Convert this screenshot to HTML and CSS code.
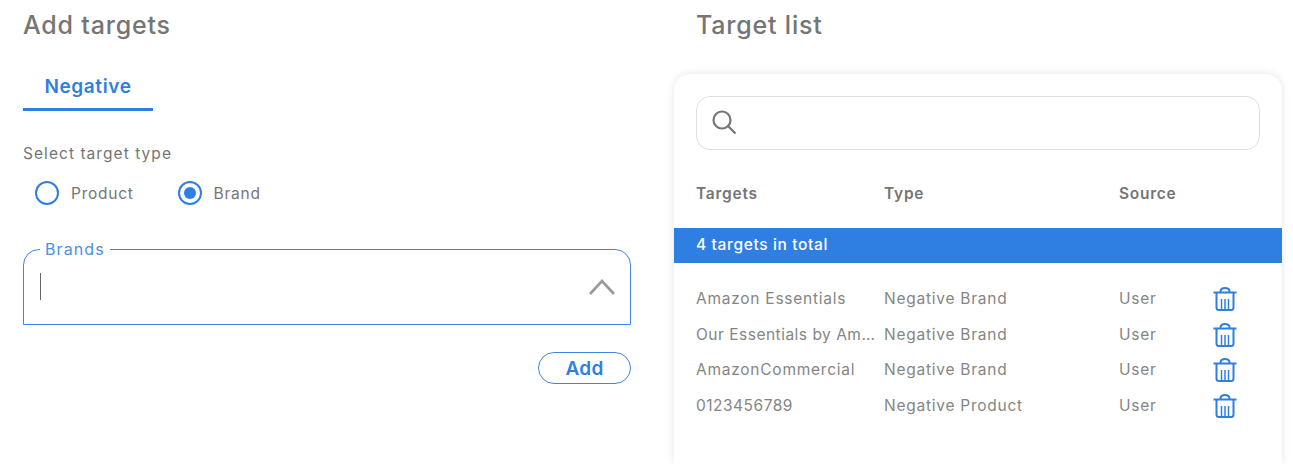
FILE: index.html
```html
<!DOCTYPE html>
<html lang="en">
<head>
  <meta charset="UTF-8">
  <meta name="viewport" content="width=device-width, initial-scale=1.0">
  <title>Targets</title>
  <link rel="stylesheet" href="styles.css">
</head>
<body>
  <svg class="defs" width="0" height="0">
    <symbol id="trash" viewBox="0 0 24 24">
      <path d="M0.500 5.500 H23.500 M3.500 5.500 V20.500 Q3.500 23 6 23 H18 Q20.500 23 20.500 20.500 V5.500 M7.500 5.500 V4.500 Q7.500 1 12 1 Q16.500 1 16.500 4.500 V5.500" fill="none" stroke="#2f7fe3" stroke-width="2"/>
      <path d="M8.500 12 V23 M12 12 V23 M15.500 12 V23" fill="none" stroke="#2f7fe3" stroke-width="1.500"/>
    </symbol>
  </svg>

  <main class="page">
    <section class="add">
      <h2 class="title">Add targets</h2>
      <div class="tabs">
        <button class="tab" type="button">Negative</button>
      </div>
      <p class="type-label">Select target type</p>
      <div class="radios">
        <label class="radio"><span class="dot"></span>Product</label>
        <label class="radio"><span class="dot dot-on"></span>Brand</label>
      </div>
      <fieldset class="brands">
        <legend>Brands</legend>
        <span class="caret"></span>
        <svg class="chevron" width="28" height="18" viewBox="0 0 28 18" fill="none">
          <path d="M2 16 L14 3 L26 16" stroke="#9a9a9a" stroke-width="2.600"/>
        </svg>
      </fieldset>
      <div class="actions">
        <button class="add-btn" type="button">Add</button>
      </div>
    </section>

    <section class="list">
      <h2 class="title list-title">Target list</h2>
      <div class="card">
        <div class="search">
          <svg class="search-icon" width="24" height="24" viewBox="0 0 24 24" fill="none" stroke="#757575" stroke-width="2.200">
            <circle cx="10" cy="10" r="8.500"/>
            <path d="M16 16 L23.500 23.500"/>
          </svg>
        </div>
        <div class="row head">
          <span>Targets</span>
          <span>Type</span>
          <span>Source</span>
        </div>
        <div class="total">4 targets in total</div>
        <div class="rows">
          <div class="row">
            <span>Amazon Essentials</span>
            <span>Negative Brand</span>
            <span>User</span>
            <svg class="trash"><use href="#trash"/></svg>
          </div>
          <div class="row">
            <span class="tight">Our Essentials by Am…</span>
            <span>Negative Brand</span>
            <span>User</span>
            <svg class="trash"><use href="#trash"/></svg>
          </div>
          <div class="row">
            <span>AmazonCommercial</span>
            <span>Negative Brand</span>
            <span>User</span>
            <svg class="trash"><use href="#trash"/></svg>
          </div>
          <div class="row">
            <span class="tight">0123456789</span>
            <span>Negative Product</span>
            <span>User</span>
            <svg class="trash"><use href="#trash"/></svg>
          </div>
        </div>
      </div>
    </section>
  </main>
</body>
</html>
```

FILE: styles.css
```css
* {
  box-sizing: border-box;
  font-family: Inter, "Open Sans", sans-serif;
}

html, body {
  height: 100%;
  margin: 0;
  overflow: hidden;
  background: #fff;
}

.defs {
  position: absolute;
}

.page {
  display: flex;
  gap: 43px;
  height: 464px;
  padding-left: 23px;
  overflow: hidden;
  color: #757575;
}

.add {
  width: 608px;
}

.title {
  margin: 0;
  height: 50px;
  line-height: 50px;
  font-size: 25px;
  font-weight: 500;
  letter-spacing: .8px;
  color: #757575;
}

.tabs {
  margin-top: 24px;
}

.tab {
  width: 130px;
  height: 37px;
  padding: 0 0 10px;
  background: none;
  border: 0;
  border-bottom: 3px solid #2f7fe3;
  font-size: 19px;
  font-weight: 600;
  letter-spacing: .6px;
  color: #2f7fe3;
}

.type-label {
  margin: 33px 0 0;
  height: 20px;
  line-height: 20px;
  font-size: 15.500px;
  letter-spacing: 1.050px;
}

.radios {
  display: flex;
  gap: 44px;
  margin-top: 17px;
  padding-left: 12px;
}

.radio {
  display: flex;
  align-items: center;
  gap: 12px;
  height: 24px;
  font-size: 15.500px;
  letter-spacing: .75px;
}

.dot {
  display: flex;
  align-items: center;
  justify-content: center;
  width: 24px;
  height: 24px;
  border: 2px solid #2f7fe3;
  border-radius: 50%;
}

.dot-on::after {
  content: "";
  width: 12px;
  height: 12px;
  border-radius: 50%;
  background: #2f7fe3;
}

.brands {
  display: flex;
  align-items: center;
  justify-content: space-between;
  height: 86px;
  margin: 34px 0 0;
  padding: 0 14px 10px 16px;
  border: 1px solid #3f86e4;
  border-radius: 16px 16px 0 0;
}

.brands legend {
  padding: 0 5px;
  font-size: 16px;
  letter-spacing: 1.100px;
  color: #4a8fe6;
}

.caret {
  width: 1px;
  height: 27px;
  background: #666;
}

.actions {
  display: flex;
  justify-content: flex-end;
  margin-top: 27px;
}

.add-btn {
  width: 93px;
  height: 32px;
  padding: 0;
  background: #fff;
  border: 1px solid #3f86e4;
  border-radius: 16px;
  font-size: 19px;
  font-weight: 600;
  letter-spacing: .3px;
  color: #2f7fe3;
}

.list {
  display: flex;
  flex-direction: column;
  width: 608px;
}

.list-title {
  padding-left: 22px;
}

.card {
  flex: 1;
  margin-top: 24px;
  padding-top: 22px;
  border-radius: 16px 16px 0 0;
  background: #fff;
  box-shadow: 0 0 8px rgba(0, 0, 0, .1);
}

.search {
  display: flex;
  align-items: center;
  height: 54px;
  margin: 0 22px;
  padding-left: 15px;
  border: 1px solid #e0e0e0;
  border-radius: 14px;
}

.search-icon {
  margin-bottom: 2px;
}

.row {
  display: grid;
  grid-template-columns: 188px 235px 94px 24px;
  align-items: center;
  padding-left: 22px;
  font-size: 15.500px;
  letter-spacing: .75px;
  white-space: nowrap;
  color: #858585;
}

.tight {
  letter-spacing: .5px;
}

.head {
  height: 78px;
  padding-top: 8px;
  font-weight: 600;
  color: #757575;
}

.total {
  height: 35px;
  padding-left: 22px;
  line-height: 34px;
  background: #2f7fe3;
  color: #fff;
  font-size: 15.500px;
  font-weight: 500;
  letter-spacing: .65px;
}

.rows {
  padding-top: 18px;
}

.rows .row {
  height: 35.500px;
}

.trash {
  width: 24px;
  height: 24px;
  margin-top: 1px;
}
```
